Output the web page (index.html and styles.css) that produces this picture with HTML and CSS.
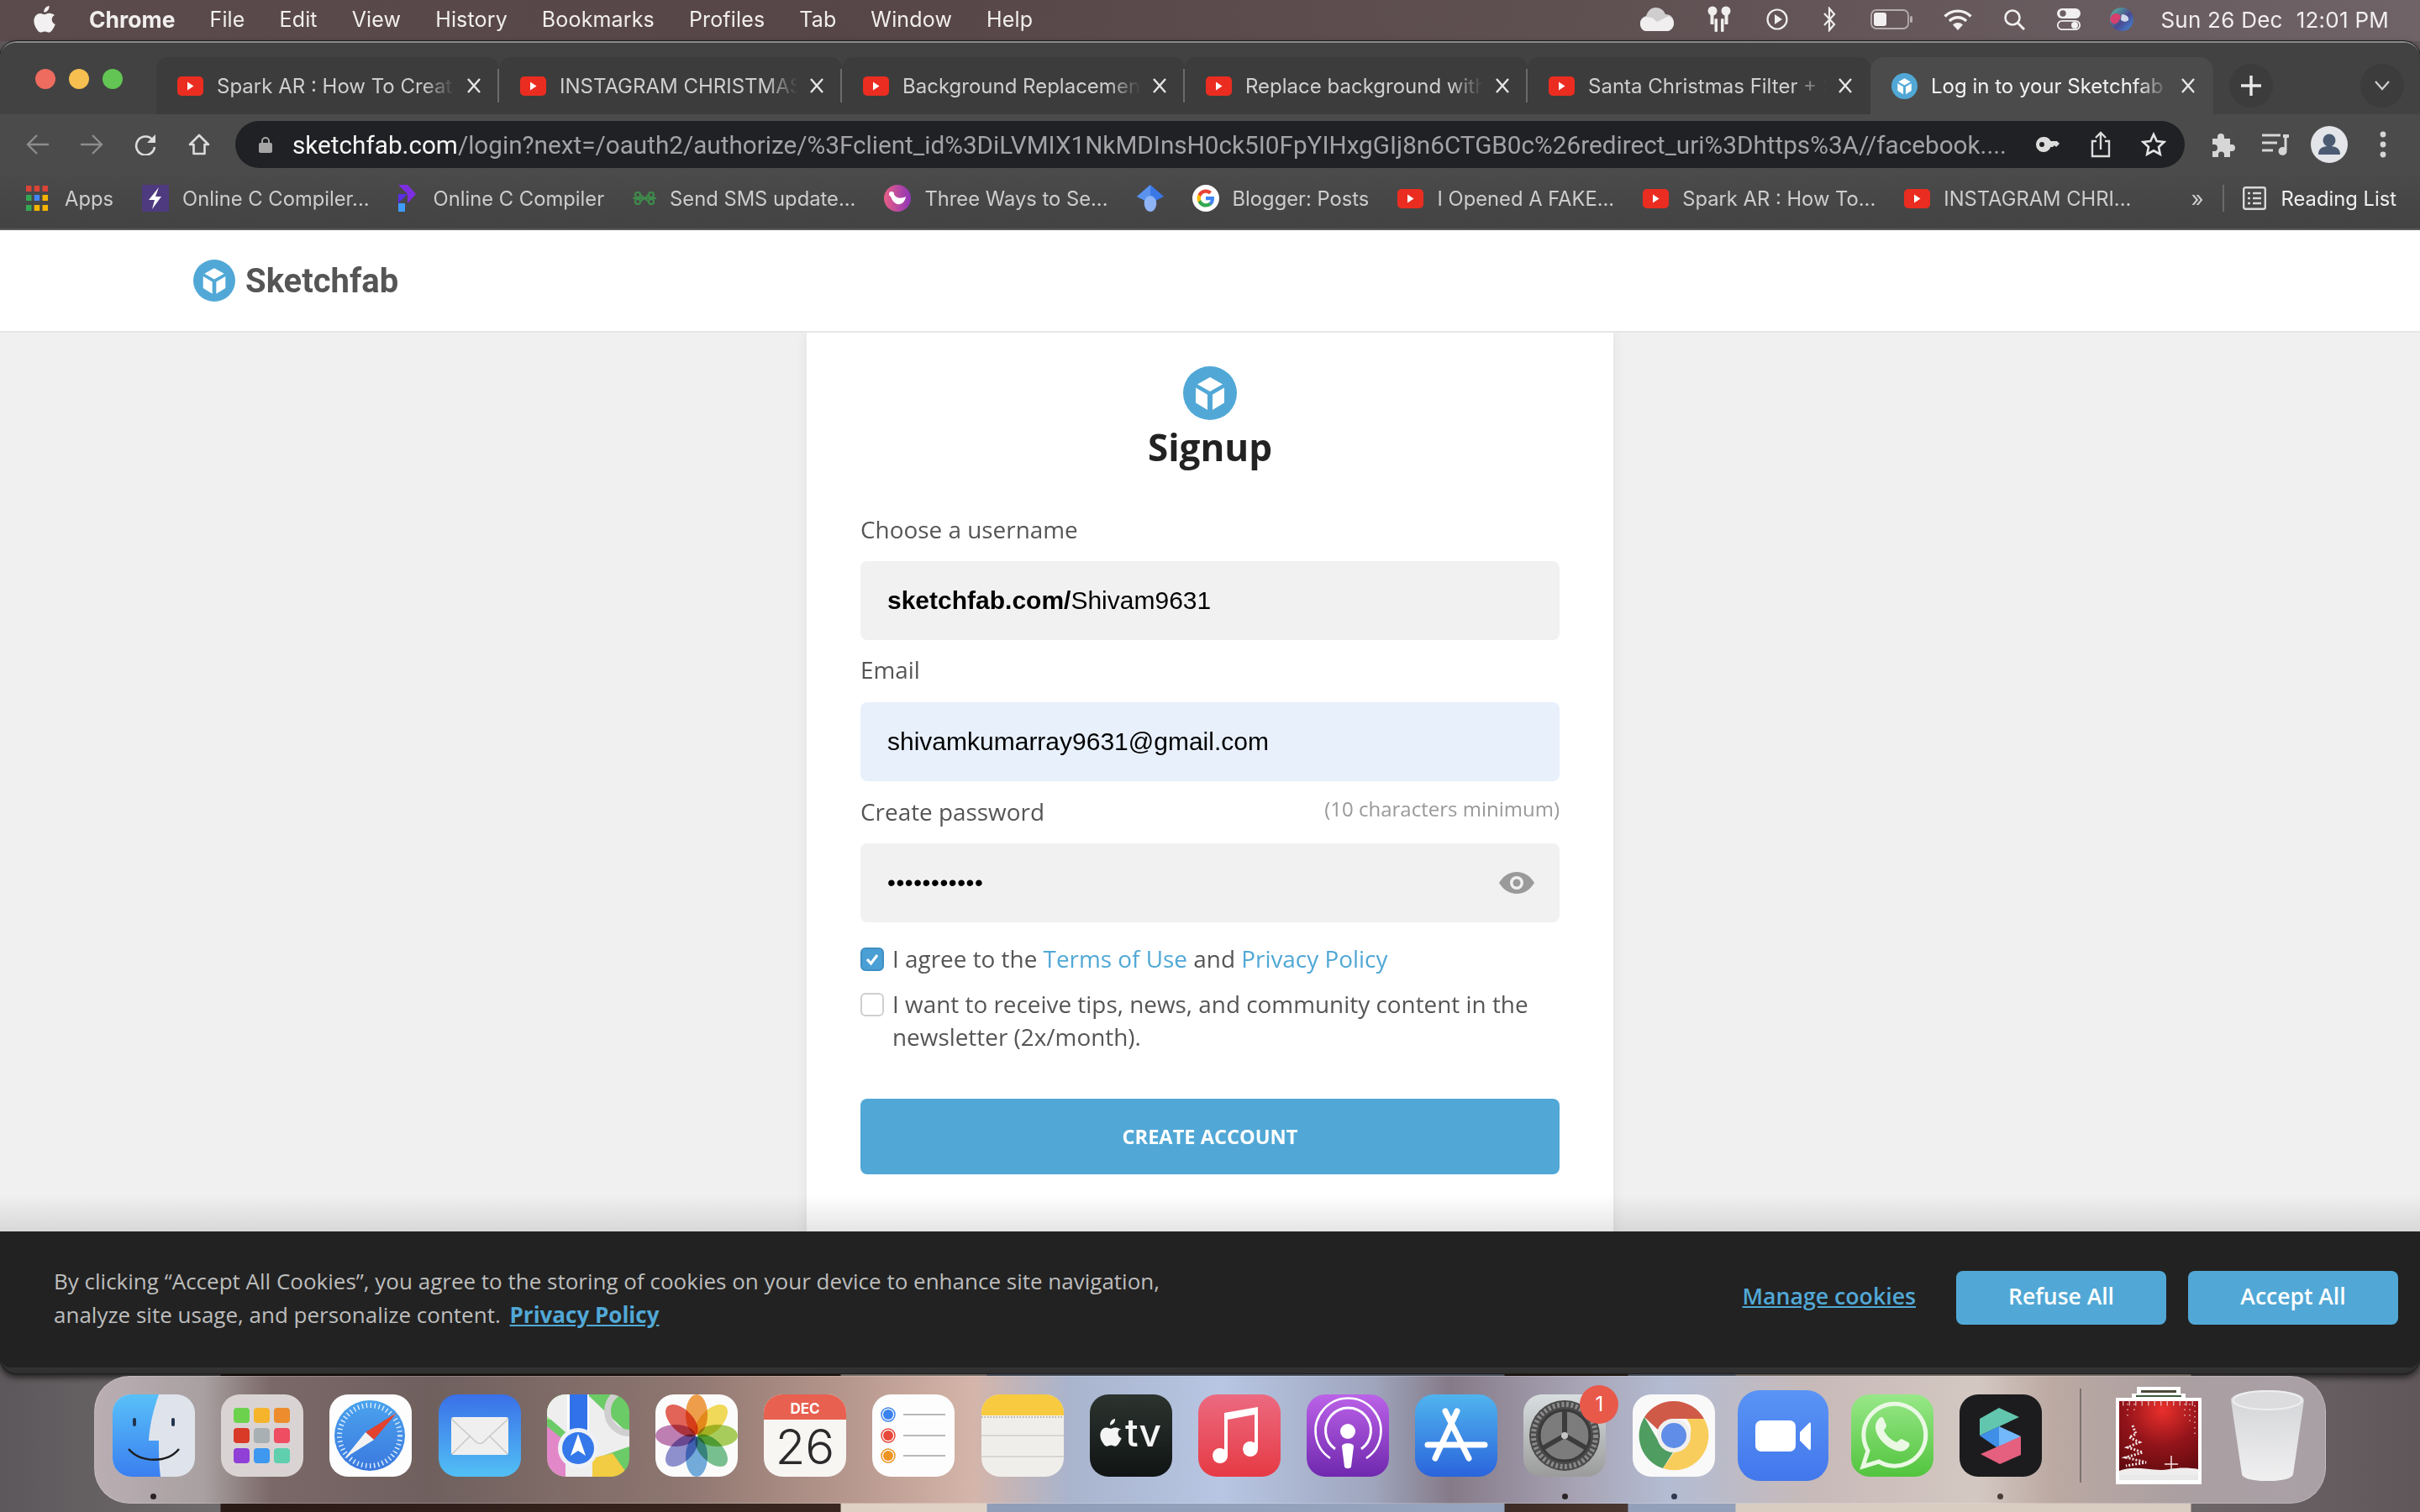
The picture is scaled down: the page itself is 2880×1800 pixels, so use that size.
FILE: index.html
```html
<!DOCTYPE html>
<html lang="en">
<head>
<meta charset="utf-8">
<title>Log in to your Sketchfab account</title>
<link rel="stylesheet" href="styles.css">
</head>
<body>
<svg class="defs" width="0" height="0" aria-hidden="true">
  <symbol id="yt" viewBox="0 0 31 23"><rect width="31" height="23" rx="5" fill="#ea2d20"/><path d="M12 6.500l7.500 5-7.500 5z" fill="#fff"/></symbol>
  <symbol id="cube" viewBox="0 0 64 64"><circle cx="32" cy="32" r="32" fill="#51a8d6"/><path d="M32 13l15 8.500-15 8.500-15-8.500z" fill="#fff"/><path d="M15 25.500l14 8.300v18.200l-14-8.500zM49 25.500l-14 8.300v18.200l14-8.500z" fill="#fff"/></symbol>
  <symbol id="x" viewBox="0 0 18 18"><path d="M2 1l14 16M16 1L2 17" fill="none" stroke="currentColor" stroke-width="2.400"/></symbol>
</svg>
<div class="desktop">
  <header class="menubar">
    <div class="menu-left">
      <svg class="apple" viewBox="0 0 26 32"><path fill="#f2f0f0" d="M18.600 0c.2 2-.5 3.800-1.600 5.200-1.200 1.400-3 2.500-4.800 2.300-.2-1.900.7-3.800 1.700-5C15 1.100 17 .1 18.600 0zM25 10.900c-2.200 1.300-3.300 3.100-3.300 5.300 0 2.500 1.400 4.600 4.100 5.700-.7 2.100-1.700 4-3.100 6-1.300 1.900-2.600 3.700-4.600 3.700s-2.500-1.200-4.700-1.200c-2.300 0-3 1.200-4.800 1.200-2 .1-3.500-2-4.800-3.900C1 24.100-1.100 17.500 1.700 12.700 3 10.400 5.400 8.900 8 8.900c2 0 3.800 1.300 5 1.300s3.300-1.600 5.600-1.400c1 0 3.900.4 6.400 2.100z"/></svg>
      <b>Chrome</b><span>File</span><span>Edit</span><span>View</span><span>History</span><span>Bookmarks</span><span>Profiles</span><span>Tab</span><span>Window</span><span>Help</span>
    </div>
    <div class="menu-right">
      <svg class="s-cloud" viewBox="0 0 42 30"><path fill="#cfcdce" d="M19 1c6 0 10 3 12 8 6 0 10 4 10 10 0 6-4 10-9 10H10C4 29 1 25 1 20c0-5 3-8 7-9 2-6 6-10 11-10z"/><path fill="#f0eeee" d="M7 29c-4-1-6-5-6-9 0-4 3-7 7-8l7 1 6 5 14-7c4 2 6 5 6 9 0 4-3 8-7 9z"/></svg>
      <svg class="s-pods" viewBox="0 0 28 32"><g fill="#efeded"><circle cx="6" cy="6" r="5.500"/><circle cx="22" cy="6" r="5.500"/><rect x="3.500" y="8" width="4" height="14"/><rect x="20.500" y="8" width="4" height="14"/><rect x="8.500" y="15" width="3.500" height="16" rx="1.500"/><rect x="16" y="15" width="3.500" height="16" rx="1.500"/></g></svg>
      <svg class="s-play" viewBox="0 0 26 26"><circle cx="13" cy="13" r="11.500" fill="none" stroke="#efeded" stroke-width="2.200"/><path d="M10 7l9 6-9 6z" fill="#efeded"/></svg>
      <svg class="s-bt" viewBox="0 0 18 30"><path d="M3 8l12 13-6 7V2l6 7L3 22" fill="none" stroke="#efeded" stroke-width="2.200"/></svg>
      <svg class="s-batt" viewBox="0 0 50 24"><rect x="1" y="1" width="44" height="22" rx="6" fill="none" stroke="#b5acaf" stroke-width="1.800"/><rect x="4" y="4" width="15" height="16" rx="3" fill="#f1efef"/><rect x="47" y="8" width="3" height="8" rx="1.500" fill="#b5acaf"/></svg>
      <svg class="s-wifi" viewBox="0 0 36 26"><path d="M2.500 9.500a22 22 0 0 1 31 0M8 15a14 14 0 0 1 20 0" fill="none" stroke="#f1efef" stroke-width="3.400"/><path d="M18 26l-6-6.500a8.500 8.500 0 0 1 12 0z" fill="#f1efef"/></svg>
      <svg class="s-search" viewBox="0 0 26 26"><circle cx="11" cy="11" r="8.500" fill="none" stroke="#f1efef" stroke-width="2.600"/><path d="M17 17l8 8" stroke="#f1efef" stroke-width="3"/></svg>
      <svg class="s-ctrl" viewBox="0 0 30 26"><rect x="1" y="0" width="28" height="12" rx="6" fill="#f1efef"/><circle cx="8" cy="6" r="3.700" fill="#6b5d61"/><rect x="1.800" y="14.800" width="26.400" height="10.400" rx="5.200" fill="#6b5d61" stroke="#f1efef" stroke-width="1.800"/><circle cx="22" cy="20" r="4" fill="#f1efef"/></svg>
      <svg class="s-siri" viewBox="0 0 28 28"><defs><linearGradient id="sg1" x1="0" x2="1" y1="0" y2="1"><stop offset="0" stop-color="#56c2a0"/><stop offset=".55" stop-color="#4a4a90"/><stop offset="1" stop-color="#3f8fe0"/></linearGradient></defs><circle cx="14" cy="14" r="14" fill="url(#sg1)"/><path d="M0 14C2 6 9 5 13 10c-1 7-9 15-13 4z" fill="#d6406f"/><path d="M14 8c5 0 9 3 8 7-3 3-8 2-9-1z" fill="#cfd8ea"/></svg>
      <span class="clock">Sun 26 Dec</span><span>12:01 PM</span>
    </div>
  </header>

  <div class="window">
    <div class="tabstrip">
      <div class="lights"><i class="l-red"></i><i class="l-yellow"></i><i class="l-green"></i></div>
      <div class="tab"><svg class="fav"><use href="#yt"/></svg><span class="tab-title">Spark AR : How To Creat</span><svg class="tab-x"><use href="#x"/></svg></div>
      <div class="tab"><svg class="fav"><use href="#yt"/></svg><span class="tab-title">INSTAGRAM CHRISTMAS</span><svg class="tab-x"><use href="#x"/></svg></div>
      <div class="tab"><svg class="fav"><use href="#yt"/></svg><span class="tab-title">Background Replacemen</span><svg class="tab-x"><use href="#x"/></svg></div>
      <div class="tab"><svg class="fav"><use href="#yt"/></svg><span class="tab-title">Replace background with</span><svg class="tab-x"><use href="#x"/></svg></div>
      <div class="tab tab-last"><svg class="fav"><use href="#yt"/></svg><span class="tab-title">Santa Christmas Filter + S</span><svg class="tab-x"><use href="#x"/></svg></div>
      <div class="tab tab-active"><svg class="fav"><use href="#cube"/></svg><span class="tab-title">Log in to your Sketchfab</span><svg class="tab-x"><use href="#x"/></svg></div>
      <div class="newtab"><svg viewBox="0 0 24 24"><path d="M12 0v24M0 12h24" stroke="#e8e8e8" stroke-width="3.400"/></svg></div>
      <div class="tabmenu"><svg viewBox="0 0 18 12"><path d="M1 1l8 9 8-9" fill="none" stroke="#cfcfcf" stroke-width="2.200"/></svg></div>
    </div>

    <div class="toolbar">
      <div class="nav">
        <svg viewBox="0 0 28 26"><path d="M27 13H3M13 2L2 13l11 11" fill="none" stroke="#8d8d8d" stroke-width="2.400"/></svg>
        <svg viewBox="0 0 28 26"><path d="M1 13h24M15 2l11 11-11 11" fill="none" stroke="#8d8d8d" stroke-width="2.400"/></svg>
        <svg viewBox="0 0 28 26"><path d="M23 8a11 11 0 1 0 2 8" fill="none" stroke="#dcdcdc" stroke-width="2.600"/><path d="M26 1v10H16z" fill="#dcdcdc"/></svg>
        <svg viewBox="0 0 28 26"><path d="M14 2L3 13h4.500v11h13V13H25z" fill="none" stroke="#dcdcdc" stroke-width="2.600" stroke-linejoin="round"/></svg>
      </div>
      <div class="omnibox">
        <svg class="lock" viewBox="0 0 16 20"><path d="M4 9V6a4 4 0 0 1 8 0v3" fill="none" stroke="#a5a5a5" stroke-width="2"/><rect y="8" width="16" height="12" rx="2" fill="#a5a5a5"/></svg>
        <div class="url"><span class="url-host">sketchfab.com</span>/login?next=/oauth2/authorize/%3Fclient_id%3DiLVMIX1NkMDInsH0ck5I0FpYIHxgGIj8n6CTGB0c%26redirect_uri%3Dhttps%3A//facebook....</div>
        <svg class="o-key" viewBox="0 0 30 20"><path d="M10 1a9 9 0 1 0 8.500 12H21l2-2 2 2 4-4-3-3H18.500A9 9 0 0 0 10 1zm-2 6a3 3 0 1 1 0 6 3 3 0 0 1 0-6z" fill="#dcdcdc" fill-rule="evenodd"/></svg>
        <svg class="o-share" viewBox="0 0 24 32"><path d="M7 12H2v18h20V12h-5M12 22V2M6 8l6-6 6 6" fill="none" stroke="#dcdcdc" stroke-width="2.400"/></svg>
        <svg class="o-star" viewBox="0 0 30 30"><path d="M15 3l3.700 8 8.800 1-6.500 6 1.800 8.700L15 22.300l-7.800 4.400L9 18l-6.500-6 8.800-1z" fill="none" stroke="#e4e4e4" stroke-width="2.600"/></svg>
      </div>
      <div class="tools">
        <svg class="t-puzzle" viewBox="0 0 30 30"><path d="M3 8h6V6a4 4 0 0 1 8 0v2h7v7h2a4 4 0 0 1 0 8h-2v7h-7v-3a3.500 3.500 0 0 0-7 0v3H3v-7h2a4 4 0 0 0 0-8H3z" fill="#d6d6d6"/></svg>
        <svg class="t-media" viewBox="0 0 32 28"><path d="M0 3h22M0 12h18M0 21h13" stroke="#d6d6d6" stroke-width="3"/><path d="M28 2v19" stroke="#d6d6d6" stroke-width="3"/><path d="M25 2h7v4h-7z" fill="#d6d6d6"/><circle cx="24.500" cy="22" r="5" fill="#d6d6d6"/></svg>
        <svg class="t-avatar" viewBox="0 0 44 44"><circle cx="22" cy="22" r="22" fill="#e3e5e9"/><circle cx="22" cy="17" r="7.500" fill="#4b5b72"/><path d="M9 34c0-8 6-10 13-10s13 2 13 10z" fill="#4b5b72"/></svg>
        <svg class="t-dots" viewBox="0 0 8 32"><circle cx="4" cy="4" r="3.400" fill="#d6d6d6"/><circle cx="4" cy="16" r="3.400" fill="#d6d6d6"/><circle cx="4" cy="28" r="3.400" fill="#d6d6d6"/></svg>
      </div>
    </div>

    <div class="bookmarks">
      <div class="bm bm-wide"><svg class="bm-ico" viewBox="0 0 26 30"><g><rect width="6.500" height="7" fill="#db4437"/><rect x="9.700" width="6.500" height="7" fill="#db4437"/><rect x="19.500" width="6.500" height="7" fill="#db4437"/><rect y="11" width="6.500" height="7" fill="#34a853"/><rect x="9.700" y="11" width="6.500" height="7" fill="#4285f4"/><rect x="19.500" y="11" width="6.500" height="7" fill="#f4b400"/><rect y="23" width="6.500" height="7" fill="#34a853"/><rect x="9.700" y="23" width="6.500" height="7" fill="#f4b400"/><rect x="19.500" y="23" width="6.500" height="7" fill="#f4b400"/></g></svg><span>Apps</span></div>
      <div class="bm"><svg class="bm-ico bm-32" viewBox="0 0 32 32"><rect width="32" height="32" fill="#4e3a7e"/><path d="M20 3L8 18h7l-3 11 11-15h-7z" fill="#fff"/></svg><span>Online C Compiler...</span></div>
      <div class="bm bm-wide"><svg class="bm-ico bm-22" viewBox="0 0 22 32"><path d="M0 0l11 0 10 11-10 11V11z" fill="#7d2ee0"/><path d="M0 11l11 0v0L0 22z" fill="#5a2fe6"/><rect y="22" width="8" height="10" fill="#3e9bff"/></svg><span>Online C Compiler</span></div>
      <div class="bm"><svg class="bm-ico bm-28" viewBox="0 0 28 16"><g fill="none" stroke="#3e8a4a" stroke-width="2.200"><circle cx="6" cy="4" r="3"/><circle cx="22" cy="4" r="3"/><circle cx="6" cy="12" r="3"/><circle cx="22" cy="12" r="3"/><path d="M9 4l10 8M19 4L9 12M0 8h28"/></g></svg><span>Send SMS update...</span></div>
      <div class="bm"><svg class="bm-ico bm-32" viewBox="0 0 32 32"><defs><linearGradient id="pk" x1="0" x2="1"><stop offset="0" stop-color="#e75f85"/><stop offset="1" stop-color="#8f35b8"/></linearGradient></defs><circle cx="16" cy="16" r="16" fill="url(#pk)"/><path d="M7 9c3 0 4 1 6 4 4 4 9 3 13 1-1 7-6 10-10 9-4-1-8-6-9-14z" fill="#fff"/><circle cx="9" cy="11" r="3" fill="#fff"/></svg><span>Three Ways to Se...</span></div>
      <div class="bm"><svg class="bm-ico bm-32" viewBox="0 0 32 32"><path d="M16 0l16 14-16 8L0 14z" fill="#3b78e7"/><path d="M16 0v22L0 14z" fill="#5a93ee"/><path d="M7 22a9 9 0 0 1 18 0c0 5-4 10-9 10s-9-5-9-10z" fill="#8fb4f6" transform="translate(3 0) scale(.81 1)"/></svg></div>
      <div class="bm"><svg class="bm-ico bm-32" viewBox="0 0 32 32"><circle cx="16" cy="16" r="16" fill="#fff"/><path d="M26 16.300c0-.8-.1-1.500-.2-2.200H16v4.100h5.700c-.3 1.300-1 2.400-2.100 3.100v2.700h3.400c2-1.800 3-4.500 3-7.700z" fill="#4285f4"/><path d="M16 26.500c2.800 0 5.200-.9 7-2.500l-3.400-2.700c-1 .6-2.200 1-3.600 1-2.700 0-5-1.800-5.800-4.300H6.700v2.700c1.700 3.500 5.300 5.800 9.300 5.800z" fill="#34a853"/><path d="M10.200 18c-.4-1.300-.4-2.700 0-4v-2.700H6.700a10.500 10.500 0 0 0 0 9.400z" fill="#fbbc05"/><path d="M16 9.700c1.500 0 2.900.5 4 1.600l3-3c-1.900-1.800-4.300-2.800-7-2.800-4 0-7.600 2.300-9.300 5.800l3.500 2.700c.8-2.500 3.100-4.300 5.800-4.300z" fill="#ea4335"/></svg><span>Blogger: Posts</span></div>
      <div class="bm"><svg class="fav"><use href="#yt"/></svg><span>I Opened A FAKE...</span></div>
      <div class="bm"><svg class="fav"><use href="#yt"/></svg><span>Spark AR : How To...</span></div>
      <div class="bm"><svg class="fav"><use href="#yt"/></svg><span>INSTAGRAM CHRI...</span></div>
      <div class="bm-end">
        <span class="more">»</span>
        <i class="bm-sep"></i>
        <div class="bm bm-read"><svg class="bm-ico bm-list" viewBox="0 0 28 28"><rect x="1.200" y="1.200" width="25.600" height="25.600" rx="2" fill="none" stroke="#d9d9d9" stroke-width="2.400"/><path d="M6 8h3M12 8h10M6 14h3M12 14h10M6 20h3M12 20h10" stroke="#d9d9d9" stroke-width="2.400"/></svg><span>Reading List</span></div>
      </div>
    </div>

    <div class="site-header">
      <svg class="site-logo"><use href="#cube"/></svg>
      <span class="wordmark">Sketchfab</span>
    </div>

    <main class="page">
      <form class="card">
        <svg class="card-logo"><use href="#cube"/></svg>
        <h1>Signup</h1>
        <label class="label label-first">Choose a username</label>
        <div class="input input-grey"><b>sketchfab.com/</b>Shivam9631</div>
        <label class="label">Email</label>
        <div class="input input-blue">shivamkumarray9631@gmail.com</div>
        <div class="label label-row"><label>Create password</label><small>(10 characters minimum)</small></div>
        <div class="input input-grey input-pass"><span class="dots">•••••••••••</span>
          <svg class="eye" viewBox="0 0 42 26"><path d="M0 13C5 5 12 0 21 0s16 5 21 13c-5 8-12 13-21 13S5 21 0 13z" fill="#9a9a9a"/><circle cx="21" cy="13" r="8" fill="#f0f0f0"/><circle cx="21" cy="13" r="4.500" fill="#9a9a9a"/></svg>
        </div>
        <div class="check check-first"><span class="box box-on"><svg viewBox="0 0 20 20"><path d="M4 10l4.500 5L16 5" fill="none" stroke="#fff" stroke-width="3.200"/></svg></span><p>I agree to the <a>Terms of Use</a> and <a>Privacy Policy</a></p></div>
        <div class="check"><span class="box"></span><p>I want to receive tips, news, and community content in the newsletter (2x/month).</p></div>
        <button class="create" type="button">CREATE ACCOUNT</button>
      </form>
    </main>

    <section class="cookies">
      <p class="cookie-text">By clicking “Accept All Cookies”, you agree to the storing of cookies on your device to enhance site navigation, analyze site usage, and personalize content. <a>Privacy Policy</a></p>
      <div class="cookie-actions">
        <a class="manage">Manage cookies</a>
        <button class="cookie-btn" type="button">Refuse All</button>
        <button class="cookie-btn" type="button">Accept All</button>
      </div>
    </section>
  </div>

  <nav class="dock">
    <div class="app"><svg viewBox="0 0 98 98"><defs><linearGradient id="f1" x1="0" x2="0" y1="0" y2="1"><stop offset="0" stop-color="#58c0f8"/><stop offset="1" stop-color="#3a7ff0"/></linearGradient></defs><rect width="98" height="98" rx="22" fill="#dfe4ec"/><path d="M22 0h33c-7 20-11 37-12 55h12c0 14 0 28 2 43H22A22 22 0 0 1 0 76V22A22 22 0 0 1 22 0z" fill="url(#f1)"/><rect x="24" y="28" width="4" height="10" rx="2" fill="#22344e"/><rect x="70" y="28" width="4" height="10" rx="2" fill="#22344e"/><path d="M19 65c15 17 46 17 60 0" fill="none" stroke="#1d1d1f" stroke-width="2.500"/></svg></div>
    <div class="app"><svg viewBox="0 0 98 98"><rect width="98" height="98" rx="22" fill="#d9d4d3"/><g><rect x="15" y="16" width="19" height="18" rx="4" fill="#6cd24e"/><rect x="39" y="16" width="19" height="18" rx="4" fill="#f6b42d"/><rect x="63" y="16" width="19" height="18" rx="4" fill="#ec8c2c"/><rect x="15" y="40" width="19" height="18" rx="4" fill="#d93a27"/><rect x="39" y="40" width="19" height="18" rx="4" fill="#a9b0b4"/><rect x="63" y="40" width="19" height="18" rx="4" fill="#ee4d62"/><rect x="15" y="64" width="19" height="18" rx="4" fill="#9040d6"/><rect x="39" y="64" width="19" height="18" rx="4" fill="#3e98f0"/><rect x="63" y="64" width="19" height="18" rx="4" fill="#5fcfae"/></g></svg></div>
    <div class="app"><svg viewBox="0 0 98 98"><defs><linearGradient id="sf" x1="0" x2="0" y1="0" y2="1"><stop offset="0" stop-color="#4aa3ee"/><stop offset="1" stop-color="#3b78de"/></linearGradient></defs><rect width="98" height="98" rx="22" fill="#fdfdfd"/><circle cx="48" cy="49" r="42" fill="url(#sf)"/><circle cx="48" cy="49" r="36" fill="none" stroke="#d8ebfb" stroke-width="6" stroke-dasharray="1.500 3.500"/><path d="M80 22L43 45l10 9z" fill="#e2422e"/><path d="M18 76l25-31 10 9z" fill="#f2f2f2"/></svg></div>
    <div class="app"><svg viewBox="0 0 98 98"><defs><linearGradient id="ml" x1="0" x2="0" y1="0" y2="1"><stop offset="0" stop-color="#3a70e8"/><stop offset="1" stop-color="#52c0f5"/></linearGradient></defs><rect width="98" height="98" rx="22" fill="url(#ml)"/><rect x="15" y="27" width="68" height="45" rx="3" fill="#f0efef"/><path d="M15 29l30 28c2 2 6 2 8 0l30-28M16 71l22-22M82 71L60 49" fill="none" stroke="#c9c9c9" stroke-width="1.500"/></svg></div>
    <div class="app"><svg viewBox="0 0 98 98"><defs><clipPath id="mp"><rect width="98" height="98" rx="22"/></clipPath></defs><g clip-path="url(#mp)"><rect width="98" height="98" fill="#6bcb66"/><path d="M0 0h28v30H0z" fill="#a4e58c"/><path d="M0 26l58 50 40-14v-14L48 0H0z" fill="#eeeeee"/><path d="M0 38l22 18v42H0z" fill="#e288c8"/><path d="M22 56l38 26v16H22z" fill="#eeeeee"/><path d="M54 76l24-6 20 28H54z" fill="#f2cc42"/><path d="M24 0h26v50H24z" fill="#fff"/><path d="M27 0h21v50H27z" fill="#3172ea"/><circle cx="98" cy="20" r="26" fill="none" stroke="#cfcfcf" stroke-width="8"/><circle cx="37" cy="64" r="24" fill="#eef1f6"/><circle cx="37" cy="64" r="19" fill="#3478ea"/><path d="M37 47l9 26-9-6-9 6z" fill="#fff"/></g></svg></div>
    <div class="app"><svg viewBox="0 0 98 98"><rect width="98" height="98" rx="22" fill="#fbfbfb"/><g transform="translate(49 49)"><ellipse class="petal" cy="-25" rx="13" ry="24" fill="#f0902c"/><ellipse class="petal" cy="-25" rx="13" ry="24" fill="#f2d63c" transform="rotate(45)"/><ellipse class="petal" cy="-25" rx="13" ry="24" fill="#9cc83f" transform="rotate(90)"/><ellipse class="petal" cy="-25" rx="13" ry="24" fill="#62b87e" transform="rotate(135)"/><ellipse class="petal" cy="-25" rx="13" ry="24" fill="#5c9fd8" transform="rotate(180)"/><ellipse class="petal" cy="-25" rx="13" ry="24" fill="#7b7fc8" transform="rotate(225)"/><ellipse class="petal" cy="-25" rx="13" ry="24" fill="#b56aa8" transform="rotate(270)"/><ellipse class="petal" cy="-25" rx="13" ry="24" fill="#e2483a" transform="rotate(315)"/></g></svg></div>
    <div class="app"><svg viewBox="0 0 98 98"><defs><clipPath id="cal"><rect width="98" height="98" rx="22"/></clipPath></defs><g clip-path="url(#cal)"><rect width="98" height="98" fill="#f7f6f3"/><rect width="98" height="30" fill="#e8604f"/></g><text class="cal-m" x="49" y="23" text-anchor="middle">DEC</text><text class="cal-d" x="49" y="83" text-anchor="middle">26</text></svg></div>
    <div class="app"><svg viewBox="0 0 98 98"><rect width="98" height="98" rx="22" fill="#fdfdfd"/><g fill="none" stroke-width="1.500"><circle cx="19" cy="24" r="8" stroke="#3b82f0"/><circle cx="19" cy="49" r="8" stroke="#e8483a"/><circle cx="19" cy="73" r="8" stroke="#ee9422"/></g><circle cx="19" cy="24" r="6" fill="#3b82f0"/><circle cx="19" cy="49" r="6" fill="#e8483a"/><circle cx="19" cy="73" r="6" fill="#ee9422"/><path d="M37 24h50M37 49h50M37 73h50" stroke="#b8b8b8" stroke-width="2"/></svg></div>
    <div class="app"><svg viewBox="0 0 98 98"><defs><clipPath id="nt"><rect width="98" height="98" rx="22"/></clipPath></defs><g clip-path="url(#nt)"><rect width="98" height="98" fill="#f0eeea"/><rect width="98" height="25" fill="#f7ca3f"/><path d="M0 27h98" stroke="#b5b2ac" stroke-width="2" stroke-dasharray="1.500 2"/><path d="M0 49h98M0 74h98" stroke="#d8d6d2" stroke-width="2"/></g></svg></div>
    <div class="app"><svg viewBox="0 0 98 98"><defs><linearGradient id="tv" x1="0" x2="0" y1="0" y2="1"><stop offset="0" stop-color="#2c342f"/><stop offset="1" stop-color="#101414"/></linearGradient></defs><rect width="98" height="98" rx="22" fill="url(#tv)"/><path fill="#f4f4f4" d="M30 29c.2 2-.5 4-1.600 5.200-1.200 1.400-2.700 2.300-4.400 2.100-.2-1.900.6-3.700 1.600-4.900 1.200-1.300 3-2.300 4.400-2.400zM37 41c-2.200 1.300-3.500 3.200-3.500 5.400 0 2.500 1.500 4.600 4.200 5.700-.7 2.100-1.700 4-3.100 6-1.300 1.900-2.600 3.700-4.600 3.700s-2.500-1.200-4.700-1.200-3 1.200-4.800 1.200c-2 .1-3.500-2-4.800-3.900-3-4-4.600-10-2-14.700 1.300-2.300 3.600-3.700 6-3.700 2 0 3.800 1.300 5 1.300s3.300-1.600 5.600-1.400c1 0 4.200.4 6.700 2.600z"/><text class="tv-t" x="42" y="62">tv</text></svg></div>
    <div class="app"><svg viewBox="0 0 98 98"><defs><linearGradient id="mu" x1="0" x2="0" y1="0" y2="1"><stop offset="0" stop-color="#ec6a80"/><stop offset="1" stop-color="#e63a44"/></linearGradient></defs><rect width="98" height="98" rx="22" fill="url(#mu)"/><path d="M35 30v43a9 9 0 1 1-4-7.500V22l40-7v50a9 9 0 1 1-4-7.500V24z" fill="#fff"/></svg></div>
    <div class="app"><svg viewBox="0 0 98 98"><defs><linearGradient id="po" x1="0" x2="0" y1="0" y2="1"><stop offset="0" stop-color="#bb62e8"/><stop offset="1" stop-color="#6f28ae"/></linearGradient></defs><rect width="98" height="98" rx="22" fill="url(#po)"/><g fill="none" stroke="#fff" stroke-width="2.600"><path d="M28 76a39 39 0 1 1 43 0"/></g><g fill="none" stroke="#fff" stroke-width="3"><path d="M34 65a27 27 0 1 1 31 0"/></g><circle cx="49" cy="44" r="9" fill="#fff"/><path d="M42 62c0-5 14-5 14 0l-3 24c-1 3-7 3-8 0z" fill="#fff"/></svg></div>
    <div class="app"><svg viewBox="0 0 98 98"><defs><linearGradient id="as" x1="0" x2="0" y1="0" y2="1"><stop offset="0" stop-color="#50b4ee"/><stop offset="1" stop-color="#2a64dc"/></linearGradient></defs><rect width="98" height="98" rx="22" fill="url(#as)"/><path d="M50 20L24 76M36 20l28 56M15 60h68" fill="none" stroke="#fff" stroke-width="7" stroke-linecap="round"/></svg></div>
    <div class="app"><svg viewBox="0 0 98 98"><defs><linearGradient id="se" x1="0" x2="0" y1="0" y2="1"><stop offset="0" stop-color="#d8dee0"/><stop offset="1" stop-color="#9b9b9b"/></linearGradient></defs><rect width="98" height="98" rx="22" fill="url(#se)"/><circle cx="49" cy="49" r="42" fill="#4a4a4a"/><circle cx="49" cy="49" r="37" fill="none" stroke="#8a8a8a" stroke-width="6" stroke-dasharray="3 2.500"/><circle cx="49" cy="49" r="30" fill="#7c7c7c" stroke="#3a3a3a" stroke-width="3"/><path d="M49 49V20M49 49l26 15M49 49L23 64" stroke="#3c3c3c" stroke-width="6"/><circle cx="49" cy="49" r="4" fill="#c5c5c5"/></svg><span class="badge">1</span></div>
    <div class="app"><svg viewBox="0 0 98 98"><rect width="98" height="98" rx="22" fill="#f9f9f9"/><path d="M49 8a41 41 0 0 1 36 21H49a20 20 0 0 0-19 13L14 27A41 41 0 0 1 49 8z" fill="#d05a48"/><path d="M14 27l18 31a20 20 0 0 0 16 11L36 88A41 41 0 0 1 14 27z" fill="#4f9d61"/><path d="M85 29a41 41 0 0 1-49 59l18-26a20 20 0 0 0 10-33z" fill="#f9cd5c"/><circle cx="49" cy="49" r="20" fill="#f0efef"/><circle cx="49" cy="49" r="15" fill="#5f8de8"/></svg></div>
    <div class="app app-zoom"><svg viewBox="0 0 108 108"><defs><linearGradient id="zm" x1="0" x2="0" y1="0" y2="1"><stop offset="0" stop-color="#5a94f5"/><stop offset="1" stop-color="#4277ec"/></linearGradient></defs><rect width="108" height="108" rx="26" fill="url(#zm)"/><rect x="21" y="36" width="48" height="37" rx="7" fill="#fff"/><path d="M74 50l11-11c1-1 2 0 2 1v29c0 2-1 3-2 2L74 60z" fill="#fff"/></svg></div>
    <div class="app"><svg viewBox="0 0 98 98"><defs><linearGradient id="wa" x1="0" x2="0" y1="0" y2="1"><stop offset="0" stop-color="#98e888"/><stop offset="1" stop-color="#52c43e"/></linearGradient></defs><rect width="98" height="98" rx="22" fill="url(#wa)"/><path d="M14 86l6-19a37 37 0 1 1 13 13z" fill="none" stroke="#eaf8e4" stroke-width="5"/><path d="M32 30c3-4 6-4 7 0l3 7c0 2-2 4-3 6 3 6 8 11 15 14 2-1 4-4 6-4l8 4c3 2 1 6-2 8-4 4-11 3-17 0-9-4-16-12-19-20-2-6-1-11 2-15z" fill="#eaf8e4"/></svg></div>
    <div class="app"><svg viewBox="0 0 98 98"><rect width="98" height="98" rx="22" fill="#1c1c1e"/><path d="M47 16l24 11-47 22V29z" fill="#62c6ae"/><path d="M24 49l23-11v27z" fill="#3f8fe8"/><path d="M47 38l26 12-26 15z" fill="#73b8fa"/><path d="M73 50v22L48 83 25 71z" fill="#e4607e"/></svg></div>
    <i class="dock-sep"></i>
    <div class="app app-doc"><svg viewBox="0 0 102 116"><defs><radialGradient id="xm" cx=".55" cy=".12" r=".95"><stop offset="0" stop-color="#ea302c"/><stop offset=".5" stop-color="#93141a"/><stop offset="1" stop-color="#5d0a0e"/></radialGradient></defs><rect x="25" y="0" width="52" height="12" fill="#fff"/><rect x="30" y="4" width="42" height="3" fill="#4a4a3a"/><rect x="19" y="8" width="64" height="8" fill="#fff"/><rect x="24" y="10" width="54" height="2" fill="#3a5a3a"/><rect y="13" width="102" height="103" fill="#fff"/><rect x="4" y="17" width="94" height="88" fill="url(#xm)"/><path d="M8 19h90" stroke="#f3d9d9" stroke-width="7" stroke-dasharray="1.500 6" opacity=".7"/><path d="M94 22v36M88 20v22M82 20v16M14 20v16M22 20v12" stroke="#f3d9d9" stroke-width="1.500" stroke-dasharray="1.500 5" opacity=".8"/><path d="M20 46l4 10-8 4 12 6-14 6 18 6-20 6 24 6-24 4" fill="none" stroke="#f3e2e2" stroke-width="3" stroke-dasharray="2 2"/><path d="M66 82v18M58 92h16" stroke="#f3e2e2" stroke-width="1.500"/><path d="M4 100c20-8 40 2 60-2 10-2 24-2 34 0v7H4z" fill="#f0eded"/><rect x="4" y="105" width="94" height="6" fill="#e9e9e9"/></svg></div>
    <div class="app app-trash"><svg viewBox="0 0 87 108"><defs><linearGradient id="tr" x1="0" x2="0" y1="0" y2="1"><stop offset="0" stop-color="#d2d3d6"/><stop offset="1" stop-color="#f0f0f1"/></linearGradient></defs><path d="M0 12c0-16 87-16 87 0l-13 88c-1 11-60 11-61 0z" fill="url(#tr)"/><ellipse cx="43.500" cy="12" rx="41" ry="11" fill="#dcdcdf" stroke="#eeeeee" stroke-width="2"/></svg></div>
    <i class="run run-finder"></i><i class="run run-settings"></i><i class="run run-chrome"></i><i class="run run-spark"></i>
  </nav>
</div>
</body>
</html>
```

FILE: styles.css
```css
* { box-sizing: border-box; }
html, body { margin: 0; padding: 0; }
body {
  width: 2880px;
  height: 1800px;
  overflow: hidden;
  background: #6a6568;
  font-family: "Open Sans", "Liberation Sans", sans-serif;
}
.defs { position: absolute; }
svg { display: block; flex: none; }

.desktop {
  width: 2880px;
  height: 1800px;
  display: flex;
  flex-direction: column;
  background:
    linear-gradient(90deg, #5d585b 0, #6f6a6b 262px, #2a1a16 263px, #3a2620 1000px, #dfd2c4 1001px, #e0d3c5 1174px, #8f9db8 1175px, #98a5be 1790px, #3c2a24 1791px, #4a3830 1937px, #93a0ba 1938px, #93a0ba 2065px, #d9ccc0 2066px, #d9ccc0 2607px, #6d6668 2608px, #5f575a 2880px);
}

/* macOS menu bar */
.menubar {
  height: 49px;
  flex: none;
  display: flex;
  justify-content: space-between;
  align-items: center;
  background: linear-gradient(90deg, #5b4b4d 0, #574647 1000px, #5f5052 1900px, #6f6368 2880px);
  color: #f1eeee;
  font-family: Inter, "Liberation Sans", sans-serif;
  font-size: 25px;
  padding: 0 37px 3px 40px;
}
.menu-left { display: flex; align-items: center; gap: 41px; }
.menu-left span { letter-spacing: .15px; }
.menu-left b { font-weight: 700; font-size: 26.500px; margin-left: -1px; }
.menu-right { display: flex; align-items: center; }
.menu-right span { font-size: 26px; letter-spacing: .25px; }
.apple { width: 26px; height: 32px; }
.s-cloud { width: 42px; height: 30px; margin-right: 39px; }
.s-pods { width: 28px; height: 32px; margin-right: 42px; }
.s-play { width: 26px; height: 26px; margin-right: 40px; }
.s-bt { width: 18px; height: 30px; margin-right: 40px; }
.s-batt { width: 50px; height: 24px; margin-right: 36px; }
.s-wifi { width: 36px; height: 26px; margin-right: 36px; }
.s-search { width: 26px; height: 26px; margin-right: 37px; }
.s-ctrl { width: 30px; height: 26px; margin-right: 34px; }
.s-siri { width: 28px; height: 28px; margin-right: 32px; }
.clock { margin-right: 16px; }

/* Browser window */
.window {
  height: 1586px;
  flex: none;
  display: flex;
  flex-direction: column;
  border-radius: 20px;
  overflow: hidden;
  background: #2a2a2a;
  box-shadow: 0 0 0 1px #1e1e1e, 0 4px 8px rgba(0,0,0,.75);
  border-top: 2px solid #8a8a8a;
  border-bottom: 5px solid #303030;
}

.tabstrip {
  height: 85px;
  flex: none;
  display: flex;
  align-items: flex-end;
  background: #424242;
}
.lights { width: 186px; height: 68px; display: flex; gap: 16px; padding: 14px 0 0 42px; flex: none; }
.lights i { width: 24px; height: 24px; border-radius: 50%; }
.l-red { background: #ee6b60; }
.l-yellow { background: #f6bf4f; }
.l-green { background: #62c554; }

.tab {
  width: 408px;
  height: 68px;
  flex: none;
  display: flex;
  align-items: center;
  padding: 0 21px 0 25px;
  background: #3c3c3c;
  border-radius: 14px 14px 0 0;
  color: #cfcfcf;
  font-family: Inter, "Liberation Sans", sans-serif;
  font-size: 24px;
  position: relative;
}
.tab::after {
  content: "";
  position: absolute;
  right: 0;
  top: 14px;
  width: 2px;
  height: 40px;
  background: #6b6b6b;
}
.tab-last::after, .tab-active::after { display: none; }
.tab-active { background: #4b4b4b; color: #f3f3f3; border-radius: 16px 16px 0 0; }
.fav { width: 31px; height: 23px; flex: none; }
.tab-active .fav { height: 31px; width: 31px; }
.tab-title {
  margin-left: 16px;
  width: 292px;
  white-space: nowrap;
  flex: none;
  -webkit-mask-image: linear-gradient(90deg, #000 84%, transparent 97%);
  mask-image: linear-gradient(90deg, #000 84%, transparent 97%);
}
.tab-x { width: 18px; height: 18px; margin-left: auto; flex: none; color: #e6e6e6; }
.newtab, .tabmenu {
  width: 52px;
  height: 52px;
  border-radius: 50%;
  background: #3c3c3c;
  flex: none;
  display: flex;
  align-items: center;
  justify-content: center;
  margin-bottom: 8px;
}
.newtab { margin-left: 19px; }
.newtab svg { width: 24px; height: 24px; }
.tabmenu { margin-left: 104px; }
.tabmenu svg { width: 18px; height: 12px; }

.toolbar {
  height: 72px;
  flex: none;
  display: flex;
  align-items: flex-start;
  background: #4b4b4b;
  padding: 8px 0 0 31px;
}
.nav { display: flex; align-items: center; gap: 36px; width: 249px; height: 56px; flex: none; }
.nav svg { width: 28px; height: 26px; }
.omnibox {
  width: 2320px;
  height: 56px;
  flex: none;
  display: flex;
  align-items: center;
  background: #202124;
  border-radius: 28px;
  padding-left: 28px;
  color: #a3a3a5;
  font-family: Roboto, "Liberation Sans", sans-serif;
  font-size: 29.700px;
}
.lock { width: 16px; height: 20px; margin-right: 24px; }
.url { width: 2044px; white-space: nowrap; }
.url-host { color: #f5f5f5; }
.o-key { width: 30px; height: 20px; margin-left: 30px; }
.o-share { width: 24px; height: 32px; margin-left: 36px; }
.o-star { width: 30px; height: 30px; margin-left: 36px; }
.tools { display: flex; align-items: center; height: 56px; flex: none; margin-left: 30px; }
.t-puzzle { width: 30px; height: 30px; }
.t-media { width: 32px; height: 28px; margin-left: 32px; }
.t-avatar { width: 44px; height: 44px; margin-left: 26px; }
.t-dots { width: 8px; height: 32px; margin-left: 38px; }

.bookmarks {
  height: 66px;
  flex: none;
  display: flex;
  align-items: center;
  background: linear-gradient(#4a4a4a, #434343);
  padding: 0 28px 8px 31px;
  color: #cdcdcd;
  font-family: Inter, "Liberation Sans", sans-serif;
  font-size: 23.750px;
  gap: 34px;
  border-bottom: 2px solid #5a5a5a;
}
.bm { display: flex; align-items: center; gap: 16px; white-space: nowrap; flex: none; }
.bm-wide { gap: 20px; }
.bm-ico { width: 26px; height: 30px; }
.bm-32 { width: 32px; height: 32px; }
.bm-22 { width: 22px; height: 32px; }
.bm-28 { width: 28px; height: 16px; }
.bm-list { width: 28px; height: 28px; margin-right: 2px; }
.bm-end { display: flex; align-items: center; margin-left: auto; }
.more { margin-right: 22px; font-size: 26px; }
.bm-sep { width: 2px; height: 32px; background: #6a6a6a; margin-right: 22px; }
.bm-read { color: #f0f0f0; }

/* Sketchfab page */
.site-header {
  height: 122px;
  flex: none;
  display: flex;
  align-items: center;
  gap: 12px;
  padding-left: 230px;
  background: #fff;
  border-bottom: 2px solid #e6e6e6;
}
.site-logo { width: 50px; height: 50px; }
.wordmark { font-family: Roboto, "Noto Sans", sans-serif; font-weight: 700; font-size: 40px; color: #555; }

.page {
  flex: 1;
  min-height: 0;
  background: #f0f0f0;
  overflow: hidden;
  display: flex;
  justify-content: center;
  position: relative;
}
.page::after {
  content: "";
  position: absolute;
  left: 0;
  right: 0;
  bottom: 0;
  height: 44px;
  background: linear-gradient(rgba(0,0,0,0), rgba(0,0,0,.1));
}
.card {
  width: 960px;
  height: 1100px;
  flex: none;
  background: #fff;
  box-shadow: 0 0 14px rgba(0,0,0,.07);
  padding: 40px 64px 0;
  display: flex;
  flex-direction: column;
  color: #555;
  font-size: 27.900px;
}
.card-logo { width: 64px; height: 64px; align-self: center; }
.card h1 { margin: 0 0 1px; font-size: 44px; font-weight: 700; line-height: 64px; color: #222; text-align: center; }
.label { display: block; height: 62px; line-height: 46px; }
.label-first { margin-top: 41px; line-height: 48px; }
.input {
  height: 94px;
  flex: none;
  border-radius: 8px;
  padding: 0 32px;
  display: flex;
  align-items: center;
  color: #000;
  font-family: "Liberation Sans", Arial, sans-serif;
  font-size: 30px;
  margin-bottom: 12px;
}
.input b { font-weight: 700; }
.input-grey { background: #f1f1f1; }
.input-blue { background: #e8f0fc; }
.label-row { display: flex; justify-content: space-between; align-items: flex-start; line-height: 48px; }
.label-row small { font-size: 24px; color: #999; line-height: 42px; }
.input-pass { justify-content: space-between; padding-right: 30px; margin-bottom: 24px; }
.dots { font-size: 28px; letter-spacing: .6px; }
.eye { width: 42px; height: 26px; }
.check { display: flex; gap: 10px; line-height: 39px; }
.check-first { margin-bottom: 15px; }
.check p { margin: 0; width: 790px; }
.check a { color: #51a8d6; }
.box {
  width: 28px;
  height: 28px;
  flex: none;
  border: 2px solid #cfcfcf;
  border-radius: 6px;
  margin-top: 6px;
  background: #fff;
}
.box-on { background: #4a9fd4; border-color: #3f8fc4; padding: 2px; }
.box-on svg { width: 20px; height: 20px; }
.create {
  width: 832px;
  height: 90px;
  flex: none;
  margin-top: 54px;
  border: 0;
  border-radius: 8px;
  background: #51a8d6;
  color: #fff;
  font-family: "Open Sans", sans-serif;
  font-size: 23.600px;
  font-weight: 700;
}

/* Cookie banner */
.cookies {
  height: 164px;
  flex: none;
  background: #222;
  display: flex;
  align-items: center;
  justify-content: space-between;
  padding: 0 26px 4px 64px;
  position: relative;
  z-index: 1;
  border-bottom: 2px solid #333;
}
.cookie-text { margin: 0; width: 1400px; color: #bdbdbd; font-size: 26px; line-height: 40px; }
.cookie-text a { color: #51a8d6; font-weight: 700; text-decoration: underline; margin-left: 4px; }
.cookie-actions { display: flex; align-items: center; gap: 26px; }
.manage { color: #51a8d6; font-size: 26.700px; font-weight: 600; text-decoration: underline; margin: 0 22px 6px 0; }
.cookie-btn {
  width: 250px;
  height: 64px;
  border: 0;
  border-radius: 8px;
  background: #51a8d6;
  color: #fff;
  font-family: "Open Sans", sans-serif;
  font-size: 26.500px;
  font-weight: 600;
  padding: 0 0 4px;
}

/* Dock */
.dock {
  width: 2656px;
  height: 152px;
  flex: none;
  margin: 3px 0 0 112px;
  padding: 0 0 10px 21px;
  display: flex;
  align-items: center;
  gap: 31.200px;
  border-radius: 42px;
  border: 1px solid rgba(255,255,255,.22);
  position: relative;
  background: linear-gradient(90deg, #baaeb3 0, #a9a0a1 130px, #7a6867 210px, #6f605e 400px, #8f7670 700px, #b7988e 900px, #d5b5a9 1044px, #a9b4cd 1160px, #b8c6e3 1340px, #9fa6be 1520px, #857a88 1613px, #a8a4b5 1766px, #b3bcd3 1870px, #c8bab8 2050px, #d4c8c2 2240px, #bba9a2 2330px, #ab9fa2 2480px, #a9a0a6 2656px);
}
.app { width: 98px; height: 98px; flex: none; position: relative; }
.app svg { width: 100%; height: 100%; }
.app-zoom { width: 108px; height: 108px; margin: 0 -4.200px; }
.app-doc { width: 102px; height: 116px; margin-left: 10px; margin-right: 4px; }
.app-trash { width: 87px; height: 108px; }
.dock-sep { width: 2px; height: 112px; background: #7d7370; margin-left: 14px; flex: none; }
.petal { mix-blend-mode: multiply; opacity: .85; }
.badge {
  position: absolute;
  right: -15px;
  top: -11px;
  width: 46px;
  height: 46px;
  border-radius: 50%;
  background: #e8594a;
  color: #fff;
  font-family: Inter, sans-serif;
  font-size: 24px;
  line-height: 46px;
  text-align: center;
}
.run { position: absolute; bottom: 4px; width: 7px; height: 7px; border-radius: 50%; background: #2a2226; }
.run-finder { left: 66px; }
.run-settings { left: 1746px; }
.run-chrome { left: 1876px; background: #2f3a52; }
.run-spark { left: 2264px; background: #4a3c38; }
.cal-m { font-family: Inter, sans-serif; font-size: 17px; font-weight: 700; fill: #fff; }
.cal-d { font-family: Inter, sans-serif; font-size: 58px; font-weight: 300; fill: #2a2a2a; }
.tv-t { font-family: Inter, sans-serif; font-size: 46px; font-weight: 500; fill: #f4f4f4; }
```
